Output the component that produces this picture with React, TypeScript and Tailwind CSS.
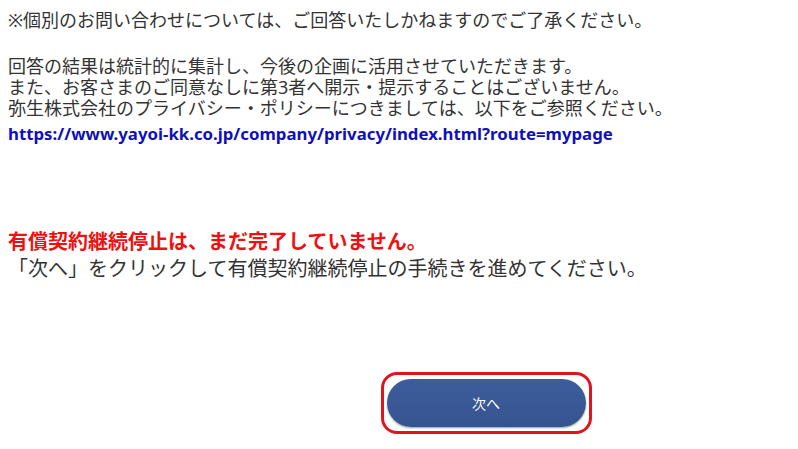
export default function App() {
  return (
    <div className="min-h-[449px] w-full bg-white px-2 pt-[10px] font-['Noto_Sans','Noto_Sans_CJK_JP',sans-serif] text-[#333333]">
      <p className="text-[18px] leading-[21px]">
        ※個別のお問い合わせについては、ご回答いたしかねますのでご了承ください。
      </p>

      <div className="mt-[25px] text-[18px] leading-[21px]">
        <p>回答の結果は統計的に集計し、今後の企画に活用させていただきます。</p>
        <p>また、お客さまのご同意なしに第3者へ開示・提示することはございません。</p>
        <p>弥生株式会社のプライバシー・ポリシーにつきましては、以下をご参照ください。</p>
        <a
          href="#"
          className="block text-[16.8px] leading-[29px] font-bold text-[#1010b8]"
        >
          https://www.yayoi-kk.co.jp/company/privacy/index.html?route=mypage
        </a>
      </div>

      <div className="mt-[80px] text-[20px] leading-[27px]">
        <p className="font-bold text-[#ee1111]">有償契約継続停止は、まだ完了していません。</p>
        <p>「次へ」をクリックして有償契約継続停止の手続きを進めてください。</p>
      </div>

      <div className="mt-[90px] flex justify-center pl-[174px]">
        <div className="rounded-[16px] border-[3px] border-[#e0141e] px-[3px] py-[4px]">
          <button className="flex h-[48px] w-[199px] items-center justify-center rounded-full bg-gradient-to-b from-[#3d5c9c] to-[#35548f] text-[14px] text-white shadow-[0_1px_2px_rgba(0,0,0,0.4)]">
            次へ
          </button>
        </div>
      </div>
    </div>
  );
}
